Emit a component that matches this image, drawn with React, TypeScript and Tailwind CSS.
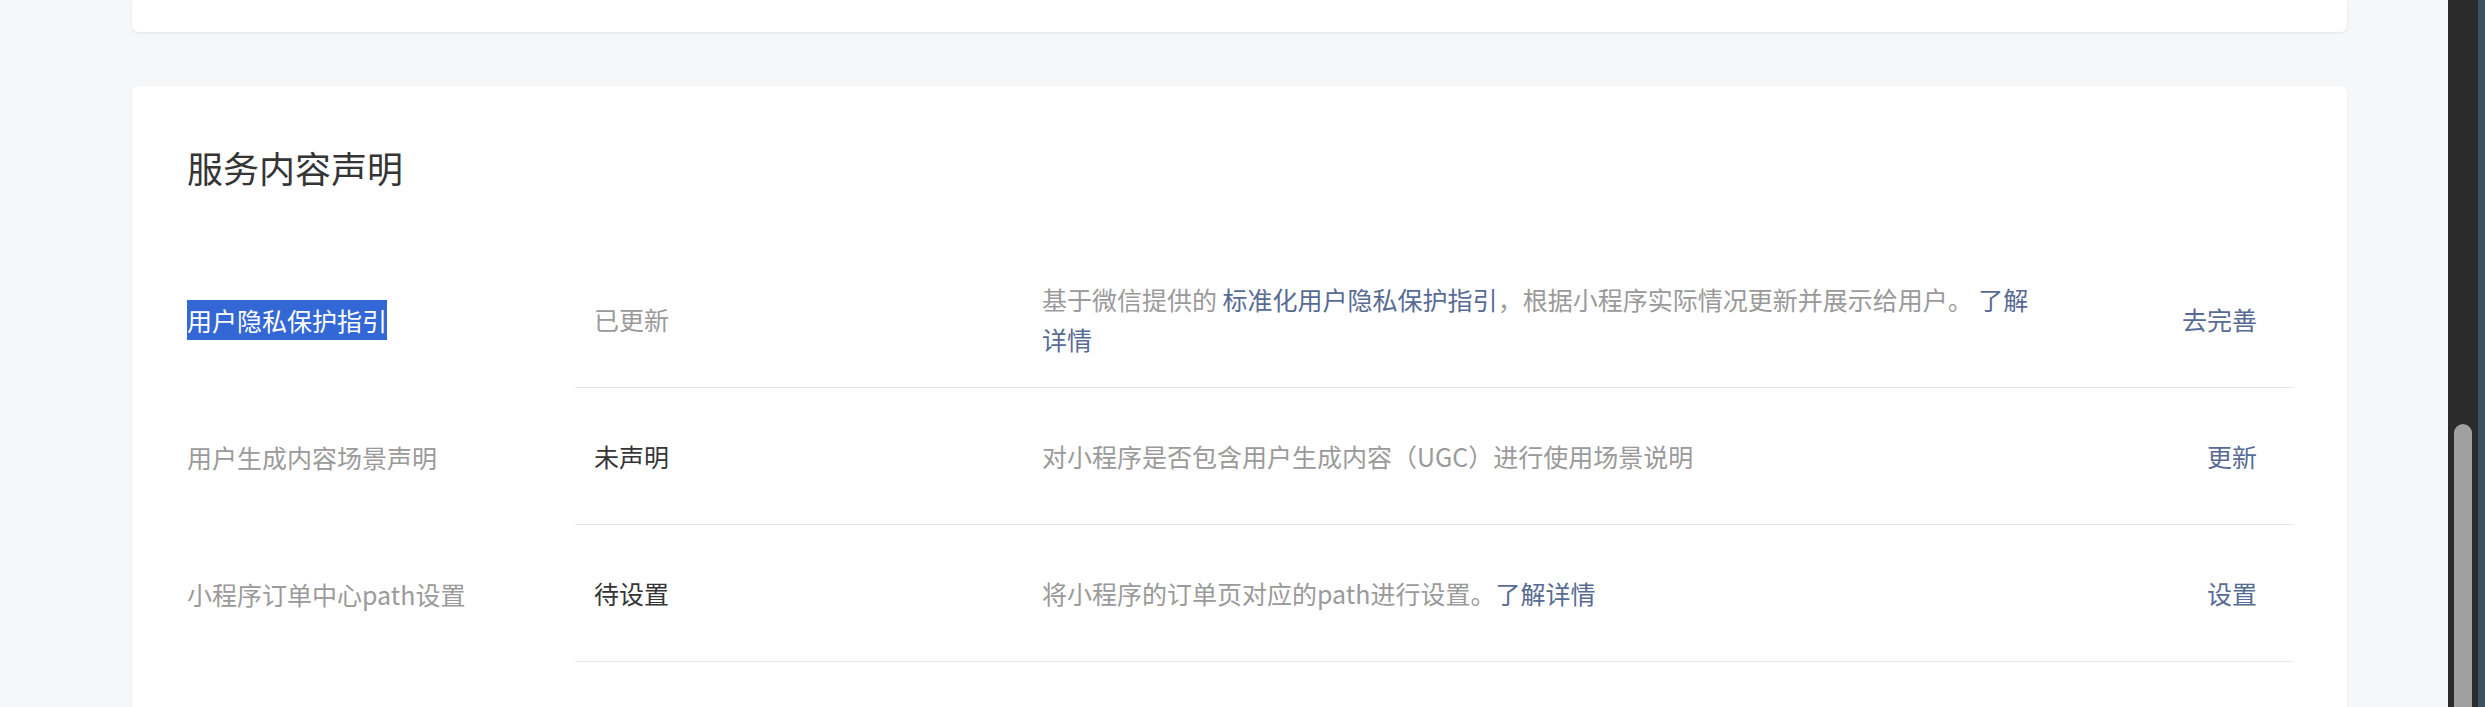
import React from "react";

const FONT = { fontFamily: '"Noto Sans CJK SC", "Noto Sans", sans-serif' };

type Row = {
  label: React.ReactNode;
  status: string;
  statusDark: boolean;
  desc: React.ReactNode;
  action: string;
};

const Link = ({ children }: { children: React.ReactNode }) => (
  <span className="text-[#576b95]">{children}</span>
);

const rows: Row[] = [
  {
    label: (
      <span className="inline-block bg-[#3367d6] text-white leading-[40px]">用户隐私保护指引</span>
    ),
    status: "已更新",
    statusDark: false,
    desc: (
      <>
        基于微信提供的 <Link>标准化用户隐私保护指引</Link>，根据小程序实际情况更新并展示给用户。 <Link>了解详情</Link>
      </>
    ),
    action: "去完善",
  },
  {
    label: "用户生成内容场景声明",
    status: "未声明",
    statusDark: true,
    desc: "对小程序是否包含用户生成内容（UGC）进行使用场景说明",
    action: "更新",
  },
  {
    label: "小程序订单中心path设置",
    status: "待设置",
    statusDark: true,
    desc: (
      <>
        将小程序的订单页对应的path进行设置。<Link>了解详情</Link>
      </>
    ),
    action: "设置",
  },
];

export default function App() {
  return (
    <div className="flex w-[2485px] h-[707px] overflow-hidden" style={FONT}>
      <div className="flex-1 bg-[#f6f7f9] pl-[132px] pr-[101px]">
        <div className="h-[32px] bg-white rounded-b-[6px] shadow-[0_1px_3px_rgba(0,0,0,0.08)]" />
        <div className="mt-[54px] bg-white rounded-[6px] shadow-[0_1px_3px_rgba(0,0,0,0.06)] pl-[55px] pr-[54px] pt-[56px] pb-[80px]">
          <h2 className="text-[36px] leading-[50px] font-normal text-[#353535]">服务内容声明</h2>
          <div className="mt-[59px] text-[25px] leading-[40px]">
            {rows.map((r, i) => (
              <div key={i} className="flex h-[137px]">
                <div className="w-[388px] flex items-center text-[#9a9a9a]">
                  <div>{r.label}</div>
                </div>
                <div className="flex-1 flex items-center border-b border-[#e7e7eb]">
                  <div
                    className={
                      "w-[467px] pl-[19px] " + (r.statusDark ? "text-[#353535]" : "text-[#9a9a9a]")
                    }
                  >
                    {r.status}
                  </div>
                  <div className="w-[1010px] text-[#9a9a9a]">{r.desc}</div>
                  <div className="flex-1 text-right pr-[36px] text-[#576b95]">{r.action}</div>
                </div>
              </div>
            ))}
          </div>
        </div>
      </div>
      <div className="w-[37px] flex bg-[#2b2b2b]">
        <div className="w-[30px] pt-[424px] pl-[6px]">
          <div className="w-[18px] h-[400px] bg-[#a0a0a0] rounded-t-[9px]" />
        </div>
        <div className="w-[7px] bg-[#3e5163]" />
      </div>
    </div>
  );
}
